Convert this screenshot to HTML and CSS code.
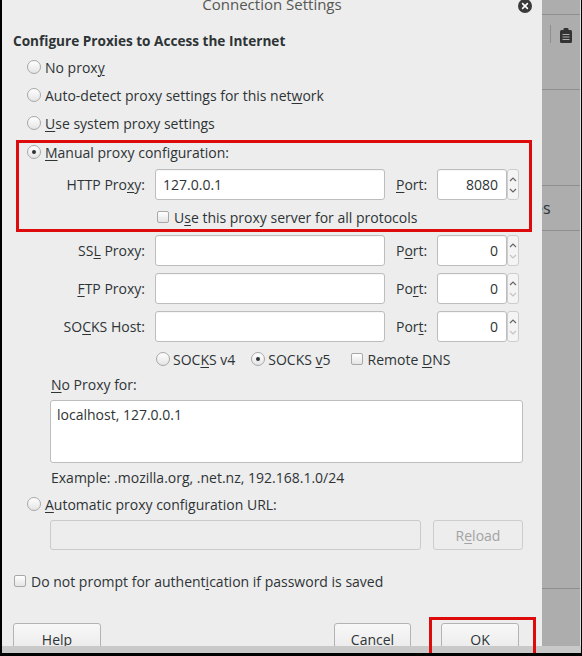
FILE: index.html
```html
<!DOCTYPE html>
<html lang="en">
<head>
  <meta charset="UTF-8">
  <title>Connection Settings</title>
  <link rel="stylesheet" href="styles.css">
</head>
<body>
  <div class="screen">
    <div class="main">
      <div class="dialog">
        <div class="titlebar">
          <span></span>
          <span class="title">Connection Settings</span>
          <span class="close">
            <svg width="14" height="14" viewBox="0 0 14 14"><circle cx="7" cy="7" r="7" fill="#3a3a3a"/><path d="M4.6 4.6l4.8 4.8M9.4 4.6l-4.8 4.8" stroke="#fff" stroke-width="1.6" stroke-linecap="round"/></svg>
          </span>
        </div>

        <div class="content">
          <h1>Configure Proxies to Access the Internet</h1>

          <div class="opt-row"><span class="radio"></span><span>No prox<u>y</u></span></div>
          <div class="opt-row"><span class="radio"></span><span>Auto-detect proxy settings for this net<u>w</u>ork</span></div>
          <div class="opt-row"><span class="radio"></span><span><u>U</u>se system proxy settings</span></div>

          <div class="manual">
            <div class="opt-row"><span class="radio checked"></span><span><u>M</u>anual proxy configuration:</span></div>
            <div class="proxy-row first">
              <span class="plabel">HTTP Pro<u>x</u>y:</span>
              <span class="field">127.0.0.1</span>
              <span class="portlabel"><u>P</u>ort:</span>
              <span class="field port">8080</span>
              <span class="spin">
                <svg width="8" height="6" viewBox="0 0 8 6"><path d="M1 5l3-3 3 3" fill="none" stroke="#666" stroke-width="1.2"/></svg>
                <svg width="8" height="6" viewBox="0 0 8 6"><path d="M1 1l3 3 3-3" fill="none" stroke="#666" stroke-width="1.2"/></svg>
              </span>
            </div>
            <div class="check-row all-protocols"><span class="check"></span><span>U<u>s</u>e this proxy server for all protocols</span></div>
          </div>

          <div class="proxy-row">
            <span class="plabel">SS<u>L</u> Proxy:</span>
            <span class="field"></span>
            <span class="portlabel">P<u>o</u>rt:</span>
            <span class="field port">0</span>
            <span class="spin">
              <svg width="8" height="6" viewBox="0 0 8 6"><path d="M1 5l3-3 3 3" fill="none" stroke="#666" stroke-width="1.2"/></svg>
              <svg width="8" height="6" viewBox="0 0 8 6"><path d="M1 1l3 3 3-3" fill="none" stroke="#c4c4c4" stroke-width="1.2"/></svg>
            </span>
          </div>
          <div class="proxy-row">
            <span class="plabel"><u>F</u>TP Proxy:</span>
            <span class="field"></span>
            <span class="portlabel">Po<u>r</u>t:</span>
            <span class="field port">0</span>
            <span class="spin">
              <svg width="8" height="6" viewBox="0 0 8 6"><path d="M1 5l3-3 3 3" fill="none" stroke="#666" stroke-width="1.2"/></svg>
              <svg width="8" height="6" viewBox="0 0 8 6"><path d="M1 1l3 3 3-3" fill="none" stroke="#c4c4c4" stroke-width="1.2"/></svg>
            </span>
          </div>
          <div class="proxy-row">
            <span class="plabel">SO<u>C</u>KS Host:</span>
            <span class="field"></span>
            <span class="portlabel">Por<u>t</u>:</span>
            <span class="field port">0</span>
            <span class="spin">
              <svg width="8" height="6" viewBox="0 0 8 6"><path d="M1 5l3-3 3 3" fill="none" stroke="#666" stroke-width="1.2"/></svg>
              <svg width="8" height="6" viewBox="0 0 8 6"><path d="M1 1l3 3 3-3" fill="none" stroke="#c4c4c4" stroke-width="1.2"/></svg>
            </span>
          </div>

          <div class="socks-row">
            <span class="socks-item v4"><span class="radio"></span><span>SOC<u>K</u>S v4</span></span>
            <span class="socks-item v5"><span class="radio checked"></span><span>SOCKS <u>v</u>5</span></span>
            <span class="socks-item"><span class="check"></span><span>Remote <u>D</u>NS</span></span>
          </div>

          <div class="noproxy-label"><u>N</u>o Proxy for:</div>
          <div class="textarea">localhost, 127.0.0.1</div>
          <div class="example">Example: .mozilla.org, .net.nz, 192.168.1.0/24</div>

          <div class="opt-row"><span class="radio"></span><span><u>A</u>utomatic proxy configuration URL:</span></div>
          <div class="url-row">
            <span class="url-field"></span>
            <span class="btn disabled"><span>R<u>e</u>load</span></span>
          </div>

          <div class="check-row prompt"><span class="check"></span><span>Do not prompt for authent<u>i</u>cation if password is saved</span></div>

          <div class="buttons">
            <span class="btn help">Help</span>
            <div class="btn-group">
              <span class="btn cancel">Cancel</span>
              <span class="btn ok">OK</span>
            </div>
          </div>
        </div>
      </div>

      <div class="backdrop">
        <div class="bd-row r1"></div>
        <div class="bd-row r2">
          <span class="divider"></span>
          <svg class="clip-icon" width="14" height="17" viewBox="0 0 14 17">
            <rect x="1" y="3" width="12" height="13" rx="1.5" fill="#333"/>
            <rect x="4.5" y="1" width="5" height="4" rx="1" fill="#333"/>
            <path d="M3.5 7.5h7M3.5 10h7M3.5 12.5h7" stroke="#adadad" stroke-width="1"/>
          </svg>
        </div>
        <div class="bd-row r3"></div>
        <div class="bd-row r4"><span class="peek">es</span></div>
        <div class="bd-row r5"></div>
        <div class="bd-row r6"></div>
      </div>
    </div>
    <div class="bottom-bar"></div>
    <div class="ok-mark"></div>
  </div>
</body>
</html>
```

FILE: styles.css
```css
* {
  box-sizing: border-box;
}

body {
  margin: 0;
  font-family: 'Open Sans', 'Noto Sans', sans-serif;
  font-size: 14px;
  color: #2e3436;
}

u {
  text-decoration-thickness: 1px;
  text-underline-offset: 2px;
}

.screen {
  position: relative;
  width: 582px;
  height: 656px;
  border-left: 2px solid #000;
  border-right: 1px solid #000;
  border-bottom: 3px solid #000;
  overflow: hidden;
  display: flex;
  flex-direction: column;
  background: #adadad;
}

.main {
  display: flex;
  height: 646px;
  overflow: hidden;
}

.dialog {
  width: 540px;
  flex-shrink: 0;
  background: #ededed;
}

/* title bar */
.titlebar {
  display: grid;
  grid-template-columns: 1fr auto 1fr;
  height: 26px;
}

.title {
  margin-top: -6px;
  font-size: 15px;
  line-height: 20px;
  color: #555753;
}

.close {
  justify-self: end;
  margin: -2px 10px 0 0;
  height: 14px;
}

.content {
  padding: 0 7px 0 11px;
}

h1 {
  margin: 5px 0 2px;
  font-size: 13.6px;
  line-height: 20px;
  font-weight: bold;
  color: #2e3436;
}

/* radios and checkboxes */
.opt-row {
  display: flex;
  align-items: center;
  height: 28px;
  padding-left: 14px;
  gap: 4px;
}

.radio {
  width: 14px;
  height: 14px;
  border-radius: 50%;
  border: 1px solid #a8a8a8;
  background: linear-gradient(#ffffff, #e4e4e4);
  display: inline-flex;
  align-items: center;
  justify-content: center;
  flex-shrink: 0;
}

.radio.checked::after {
  content: '';
  width: 4px;
  height: 4px;
  border-radius: 50%;
  background: #2e3436;
}

.check {
  width: 12px;
  height: 12px;
  border-radius: 2px;
  border: 1px solid #a8a8a8;
  background: linear-gradient(#ffffff, #e4e4e4);
  flex-shrink: 0;
}

.check-row {
  display: flex;
  align-items: center;
  height: 28px;
  gap: 5px;
}

/* manual proxy block with highlight */
.manual {
  padding: 1px 0 4px;
  outline: 3px solid #dd0b0b;
  outline-offset: -6px;
}

.all-protocols {
  margin-top: 3px;
  padding-left: 144px;
}

.proxy-row {
  display: grid;
  grid-template-columns: 142px 230px 52px 70px 12px;
  align-items: center;
  height: 31px;
  margin-top: 7px;
}

.proxy-row.first {
  margin-top: 3px;
}

.manual + .proxy-row {
  margin-top: 0;
}

.plabel {
  text-align: right;
  padding-right: 10px;
}

.portlabel {
  padding-left: 11px;
}

.field {
  height: 31px;
  line-height: 29px;
  padding: 0 7px;
  background: #fff;
  border: 1px solid #bdbdbd;
  border-radius: 3px;
  box-shadow: inset 0 1px 1px rgba(0, 0, 0, 0.04);
}

.field.port {
  text-align: right;
  padding-right: 8px;
}

.spin {
  height: 31px;
  border: 1px solid #cdcdcd;
  border-radius: 3px;
  background: #f4f4f4;
  display: flex;
  flex-direction: column;
  justify-content: space-between;
  align-items: center;
  padding: 6px 0 5px;
}

.spin svg {
  display: block;
}

.socks-row {
  display: flex;
  align-items: center;
  height: 28px;
  margin-top: 3px;
  padding-left: 143px;
}

.socks-item {
  display: inline-flex;
  align-items: center;
  gap: 3px;
}

.socks-item.v4 {
  margin-right: 16px;
}

.socks-item.v5 {
  margin-right: 20px;
}

.socks-item .check {
  margin-right: 2px;
}

.noproxy-label {
  margin: 3px 0 0 38px;
  line-height: 18px;
}

.textarea {
  margin: 6px 0 0 37px;
  width: 473px;
  height: 63px;
  padding: 5px 6px;
  line-height: 18px;
  background: #fff;
  border: 1px solid #bdbdbd;
  border-radius: 3px;
}

.example {
  margin: 6px 0 0 38px;
  line-height: 18px;
}

.example + .opt-row {
  margin-top: 3px;
}

.url-row {
  display: flex;
  gap: 12px;
  margin: 2px 0 0 37px;
}

.url-field {
  width: 371px;
  height: 30px;
  border: 1px solid #cacaca;
  border-radius: 3px;
  background: #ededed;
}

.btn {
  display: inline-flex;
  align-items: center;
  justify-content: center;
  height: 32px;
  border: 1px solid #b3b3b3;
  border-radius: 3px;
  background: linear-gradient(#f8f8f8, #e8e8e8);
}

.btn.disabled {
  width: 90px;
  height: 30px;
  color: #a3a3a3;
  border-color: #cdcdcd;
  background: #ededed;
}

.prompt {
  margin-top: 17px;
  padding-left: 1px;
}

.buttons {
  display: flex;
  justify-content: space-between;
  margin-top: 28px;
}

.btn-group {
  display: flex;
  gap: 30px;
  margin-right: 16px;
}

.help {
  width: 88px;
}

.cancel {
  width: 77px;
}

.ok {
  width: 78px;
}

/* window behind the dialog */
.backdrop {
  flex: 1;
  display: flex;
  flex-direction: column;
  border-right: 1px solid #dedede;
  overflow: hidden;
}

.bd-row {
  border-bottom: 1px solid #8e8e8e;
  flex-shrink: 0;
}

.r1 { height: 15px; }
.r3 { height: 96px; }
.r5 { height: 358px; }
.r6 { border-bottom: none; flex: 1; }

.r2 {
  height: 75px;
  display: flex;
  align-items: flex-start;
}

.divider {
  width: 1px;
  height: 18px;
  margin: 10px 0 0 8px;
  background: #8e8e8e;
}

.clip-icon {
  margin: 12px 0 0 8px;
}

.r4 {
  height: 45px;
  display: flex;
  align-items: center;
}

.peek {
  margin-left: -8px;
  font-size: 16px;
  color: #2e3436;
}

.bottom-bar {
  height: 7px;
  background: #c9c9c9;
}

.ok-mark {
  position: absolute;
  left: 427px;
  top: 617px;
  width: 107px;
  height: 60px;
  border: 3px solid #dd0b0b;
}
```
